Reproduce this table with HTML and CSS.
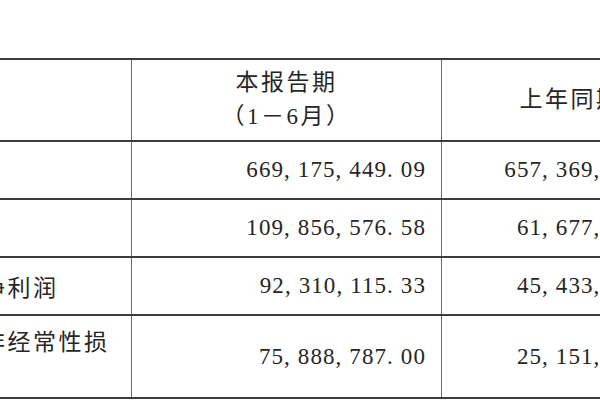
FILE: index.html
```html
<!DOCTYPE html>
<html lang="zh">
<head>
<meta charset="utf-8">
<link rel="stylesheet" href="styles.css">
</head>
<body>
<table class="fin">
  <colgroup>
    <col class="c1">
    <col class="c2">
    <col class="c3">
  </colgroup>
  <tr class="head">
    <td class="label"></td>
    <td class="hd">本报告期<br>（1－6月）</td>
    <td class="hd">上年同期</td>
  </tr>
  <tr class="row">
    <td class="label">营业收入</td>
    <td class="num">669, 175, 449. 09</td>
    <td class="num">657, 369, 708. 52</td>
  </tr>
  <tr class="row">
    <td class="label">利润总额</td>
    <td class="num">109, 856, 576. 58</td>
    <td class="num">61, 677, 340. 16</td>
  </tr>
  <tr class="row">
    <td class="label">归属于本公司普通股股东的净利润</td>
    <td class="num">92, 310, 115. 33</td>
    <td class="num">45, 433, 821. 67</td>
  </tr>
  <tr class="tall">
    <td class="label">归属于上市公司股东的扣除非经常性损<br>益的净利润</td>
    <td class="num">75, 888, 787. 00</td>
    <td class="num">25, 151, 096. 44</td>
  </tr>
</table>
</body>
</html>
```
FILE: styles.css
```css
html, body {
  margin: 0;
  padding: 0;
  background: #ffffff;
  overflow: hidden;
}

body {
  padding-top: 58px;
  color: #262626;
  font-family: "Liberation Serif", "Noto Sans CJK SC", serif;
}

.fin {
  border-collapse: collapse;
  table-layout: fixed;
  margin-left: -335px;
  width: 1034px;
}

.c1 { width: 466px; }
.c2 { width: 310px; }
.c3 { width: 258px; }

.fin td {
  padding: 0;
  border-top: 2px solid #3c3c3c;
  border-bottom: 2px solid #3c3c3c;
  border-left: 1px solid #6a6a6a;
  border-right: 1px solid #6a6a6a;
  vertical-align: middle;
  white-space: nowrap;
}

.head td { height: 80px; }
.row td { height: 56px; }
.tall td { height: 81px; }

.label {
  padding-left: 10px !important;
  font-family: "Noto Sans CJK SC", sans-serif;
  font-size: 23px;
  letter-spacing: 2.5px;
  line-height: 34px;
  text-align: left;
}

.hd {
  font-family: "Liberation Serif", "Noto Sans CJK SC", serif;
  font-size: 23px;
  letter-spacing: 2.5px;
  line-height: 34px;
  text-align: center;
}

.num {
  font-family: "Liberation Serif", serif;
  font-size: 23px;
  letter-spacing: 1.1px;
  text-align: right;
  padding-right: 15px !important;
}
```
